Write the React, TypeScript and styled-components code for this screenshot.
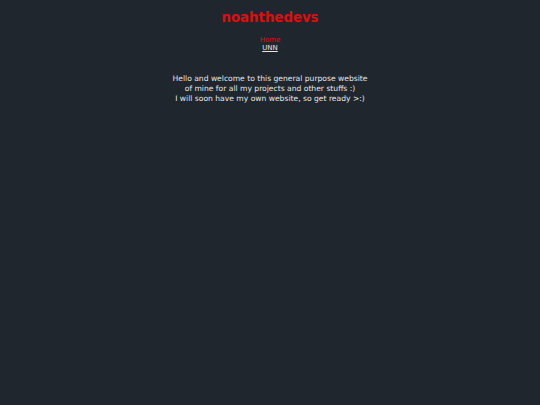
import styled, { createGlobalStyle } from "styled-components"

const GlobalStyle = createGlobalStyle`
    html, body {
        margin: 0;
        padding: 0;
        background-color: #1f262e;
    }
    body {
        font-family: "DejaVu Sans", Verdana, sans-serif;
        color: #e6e6e6;
        min-height: 100vh;
    }
`

const App: React.FC = () => {
    return (
        <>
            <GlobalStyle />
            <Page>
                <Title>noahthedevs</Title>
                <Nav>
                    <NavLink href="#" $active>Home</NavLink>
                    <NavLink href="#">UNN</NavLink>
                </Nav>
                <Intro>
                    Hello and welcome to this general purpose website<br />
                    of mine for all my projects and other stuffs :)<br />
                    I will soon have my own website, so get ready &gt;:)
                </Intro>
            </Page>
        </>
    )
}

const Page = styled.div`
    display: flex;
    flex-direction: column;
    align-items: center;
    text-align: center;
    padding-top: 9px;
`

const Title = styled.h1`
    margin: 0;
    font-size: 13.3px;
    font-weight: 700;
    color: #e00d0d;
    line-height: 17px;
`

const Nav = styled.div`
    display: flex;
    flex-direction: column;
    align-items: center;
    margin-top: 10px;
`

const NavLink = styled.a<{ $active?: boolean }>`
    font-size: 7px;
    line-height: 8px;
    color: ${p => p.$active ? '#e00d0d' : '#e6e6e6'};
    text-decoration: ${p => p.$active ? 'none' : 'underline'};
`

const Intro = styled.p`
    margin: 22px 0 0;
    font-size: 7.6px;
    line-height: 10px;
    color: #e6e6e6;
`

export default App
